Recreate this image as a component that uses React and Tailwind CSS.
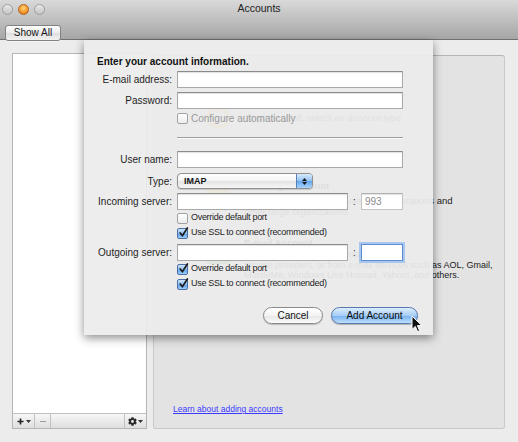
import { FaCog } from "react-icons/fa";

function Light({ orange }) {
  return (
    <span
      className={
        orange
          ? "w-[11px] h-[11px] rounded-full border border-[#b2601e] bg-[radial-gradient(circle_at_50%_35%,#ffd27a,#f39a2c_55%,#d46a17)]"
          : "w-[11px] h-[11px] rounded-full border border-[#9d9d9d] bg-[linear-gradient(#e8e8e8,#c3c3c3)]"
      }
    />
  );
}

function Field({ className = "w-[226px]", children }) {
  return (
    <div
      className={`h-[17px] bg-white border border-[#a9a9a9] border-t-[#8b8b8b] shadow-[inset_0_1px_1px_rgba(0,0,0,0.12)] flex items-center pl-[3px] ${className}`}
    >
      {children}
    </div>
  );
}

function Label({ children }) {
  return (
    <span className="w-[80px] shrink-0 pr-[5px] text-right whitespace-nowrap text-[10px] text-[#1e1e1e]">
      {children}
    </span>
  );
}

function Check({ checked, label, small = true, disabled }) {
  return (
    <div className="flex items-center gap-[3px]">
      <span
        className={
          checked
            ? "w-[11px] h-[11px] rounded-[2px] border border-[#4a6ea5] bg-[linear-gradient(#cfe5fb,#8dbdf0_50%,#5a9ce6_51%,#9fd0fb)] flex items-center justify-center relative"
            : "w-[11px] h-[11px] rounded-[2px] border border-[#a2a2a2] bg-[linear-gradient(#ffffff,#ececec)]"
        }
      >
        {checked && (
          <svg width="11" height="12" viewBox="0 0 11 12" className="absolute -top-[3px] left-[0px]">
            <path d="M2.2 7 L4.4 9.6 L9.4 2" stroke="#1c1c1c" strokeWidth="1.7" fill="none" strokeLinecap="round" />
          </svg>
        )}
      </span>
      <span
        className={
          small
            ? "text-[9px] tracking-[-0.3px] whitespace-nowrap text-[#1e1e1e]"
            : `text-[10px] whitespace-nowrap ${disabled ? "text-[#9a9a9a]" : "text-[#1e1e1e]"}`
        }
      >
        {label}
      </span>
    </div>
  );
}

export default function App() {
  return (
    <div className="w-[518px] h-[442px] relative overflow-hidden bg-[#ececec] font-['Liberation_Sans',Arial,sans-serif] select-none">
      {/* title bar + toolbar */}
      <div className="h-[40px] bg-[linear-gradient(#d9d9d9,#a6a6a6)] border-b border-[#707070]">
        <div className="h-[17px] grid grid-cols-[1fr_auto_1fr] items-center">
          <div className="flex items-center gap-[5px] pl-[2px] pt-[1px]">
            <Light />
            <Light orange />
            <Light />
          </div>
          <span className="text-[10.5px] text-[#222]">Accounts</span>
          <div />
        </div>
        <div className="pl-[5px] pt-[2px]">
          <button className="h-[16px] w-[56px] rounded-[3px] border border-[#828282] bg-[linear-gradient(#fdfdfd,#ececec_50%,#dedede_51%,#f1f1f1)] shadow-[0_1px_0_rgba(255,255,255,0.4)] text-[10px] text-[#161616] leading-none">
            Show All
          </button>
        </div>
      </div>

      {/* window body */}
      <div className="flex px-[12px] pt-[13px] gap-[6px]">
        {/* account list */}
        <div className="w-[135px] h-[376px] border border-[#b5b5b5] bg-white flex flex-col">
          <div className="flex-1" />
          <div className="h-[15px] flex border-t border-[#c2c2c2] bg-[linear-gradient(#f7f7f7,#dedede)]">
            <div className="w-[22px] flex items-center justify-center gap-[2px] border-r border-[#c2c2c2]">
              <svg width="7" height="7" viewBox="0 0 7 7">
                <path d="M3.5 0.5 V6.5 M0.5 3.5 H6.5" stroke="#222" strokeWidth="1.6" />
              </svg>
              <svg width="5" height="3" viewBox="0 0 5 3">
                <path d="M0 0 H5 L2.5 3 Z" fill="#333" />
              </svg>
            </div>
            <div className="w-[16px] flex items-center justify-center border-r border-[#c2c2c2]">
              <span className="w-[6px] h-px bg-[#9a9a9a]" />
            </div>
            <div className="flex-1" />
            <div className="w-[22px] flex items-center justify-center gap-[1px] border-l border-[#c2c2c2]">
              <FaCog className="text-[#2a2a2a]" size={9} />
              <svg width="5" height="3" viewBox="0 0 5 3">
                <path d="M0 0 H5 L2.5 3 Z" fill="#333" />
              </svg>
            </div>
          </div>
        </div>

        {/* right panel */}
        <div className="w-[352px] h-[374px] mt-[2px] rounded-[3px] border border-[#c9c9c9] border-t-[#b5b5b5] bg-[#e3e3e3] flex flex-col pt-[52px] pl-[52px] text-[#1a1a1a]">
          <div className="flex items-center gap-[14px] h-[20px]">
            <span className="w-[24px] h-[20px] rounded-full border-[3px] border-[#e7b53c]" />
            <span className="text-[9.5px] text-[#3a3a3a] whitespace-nowrap">To get started, select an account type.</span>
          </div>
          <div className="flex gap-[14px] mt-[52px]">
            <span className="w-[24px] h-[18px] mt-[3px] rounded-[4px] bg-[linear-gradient(#f4c152,#e08a1c)]" />
            <div>
              <p className="text-[9.5px] font-bold leading-[12px]">Exchange Account</p>
              <p className="text-[9.5px] leading-[11px] mt-[3px] whitespace-nowrap">
                Exchange accounts are used by corporations and
                <br />
                other large organizations.
              </p>
            </div>
          </div>
          <div className="flex gap-[14px] mt-[20px]">
            <span className="w-[24px] h-[20px] mt-[7px] rounded-[4px] bg-[linear-gradient(#9ad86a,#3c9c2c)]" />
            <div>
              <p className="text-[9.5px] font-bold leading-[12px]">E-mail Account</p>
              <p className="text-[9px] leading-[10.5px] whitespace-nowrap">
                E-mail accounts are from internet
                <br />
                service providers, or from e-mail services such as AOL, Gmail,
                <br />
                MobileMe, Windows Live Hotmail, Yahoo!, and others.
              </p>
            </div>
          </div>
          <a className="mt-auto mb-[12px] -ml-[33px] text-[8.5px] text-[#3b3bff] underline">
            Learn about adding accounts
          </a>
        </div>
      </div>

      {/* sheet */}
      <div className="absolute left-[84px] top-[40px] w-[349px] h-[295px] bg-[#ececec]/[0.93] shadow-[0_3px_9px_rgba(0,0,0,0.45)] pl-[13px] flex flex-col">
        <p className="mt-[15px] h-[14px] leading-[14px] text-[10px] font-bold text-[#111]">
          Enter your account information.
        </p>

        <div className="mt-[2px] h-[17px] flex items-center">
          <Label>E-mail address:</Label>
          <Field />
        </div>
        <div className="mt-[4px] h-[17px] flex items-center">
          <Label>Password:</Label>
          <Field />
        </div>
        <div className="mt-[1px] h-[16px] flex items-center pl-[80px]">
          <Check label="Configure automatically" small={false} disabled />
        </div>
        <div className="mt-[11px] ml-[80px] w-[226px] h-px bg-[#9e9e9e] shadow-[0_1px_0_#fafafa]" />

        <div className="mt-[13px] h-[17px] flex items-center">
          <Label>User name:</Label>
          <Field />
        </div>
        <div className="mt-[5px] h-[16px] flex items-center">
          <Label>Type:</Label>
          <div className="w-[136px] h-[16px] rounded-[4px] border border-[#8f8f8f] bg-[linear-gradient(#ffffff,#f3f3f3_50%,#e4e4e4_51%,#f6f6f6)] flex overflow-hidden shadow-[0_1px_1px_rgba(0,0,0,0.15)]">
            <span className="flex-1 pl-[6px] text-[9px] font-bold leading-[14px] text-[#151515]">IMAP</span>
            <span className="w-[16px] border-l border-[#5b80b7] bg-[linear-gradient(#d6eafd,#93c3f3_50%,#63a5ec_51%,#a9d5fb)] flex flex-col items-center justify-center gap-[1px]">
              <svg width="5" height="3" viewBox="0 0 5 3">
                <path d="M0 3 H5 L2.5 0 Z" fill="#1a1a1a" />
              </svg>
              <svg width="5" height="3" viewBox="0 0 5 3">
                <path d="M0 0 H5 L2.5 3 Z" fill="#1a1a1a" />
              </svg>
            </span>
          </div>
        </div>
        <div className="mt-[4px] h-[17px] flex items-center">
          <Label>Incoming server:</Label>
          <Field className="w-[171px]" />
          <span className="w-[13px] text-center text-[10px] text-[#333]">:</span>
          <Field className="w-[42px] border-[#c4c4c4] border-t-[#b0b0b0]">
            <span className="text-[10px] text-[#8a8a8a]">993</span>
          </Field>
        </div>
        <div className="mt-[1px] h-[14px] flex items-center pl-[80px]">
          <Check label="Override default port" />
        </div>
        <div className="mt-[1px] h-[14px] flex items-center pl-[80px]">
          <Check checked label="Use SSL to connect (recommended)" />
        </div>

        <div className="mt-[4px] h-[17px] flex items-center">
          <Label>Outgoing server:</Label>
          <Field className="w-[171px]" />
          <span className="w-[13px] text-center text-[10px] text-[#333]">:</span>
          <div className="w-[42px] h-[17px] bg-white border border-[#5f8dd3] shadow-[0_0_0_2px_#a8c6ee]" />
        </div>
        <div className="mt-[1px] h-[14px] flex items-center pl-[80px]">
          <Check checked label="Override default port" />
        </div>
        <div className="mt-[1px] h-[14px] flex items-center pl-[80px]">
          <Check checked label="Use SSL to connect (recommended)" />
        </div>

        <div className="mt-[16px] h-[17px] flex items-center gap-[8px] pl-[166px]">
          <button className="w-[60px] h-[17px] rounded-full border border-[#8a8a8a] bg-[linear-gradient(#ffffff,#f4f4f4_50%,#e6e6e6_51%,#fbfbfb)] shadow-[0_1px_1px_rgba(0,0,0,0.2)] text-[10px] text-[#111] leading-none">
            Cancel
          </button>
          <button className="w-[87px] h-[17px] rounded-full border border-[#5678ad] bg-[linear-gradient(#dcedfd,#a7cdf5_50%,#74b0ef_51%,#bfe0fc)] shadow-[0_1px_1px_rgba(0,0,0,0.25)] text-[10px] text-[#0d0d0d] leading-none">
            Add Account
          </button>
        </div>
      </div>

      {/* mouse pointer */}
      <svg width="12" height="18" viewBox="0 0 12 18" className="absolute left-[411px] top-[315px]">
        <path
          d="M1 1 L1 14.5 L4.3 11.4 L6.6 16.6 L8.6 15.7 L6.4 10.6 L10.8 10.6 Z"
          fill="#111"
          stroke="#fff"
          strokeWidth="1"
          strokeLinejoin="round"
        />
      </svg>
    </div>
  );
}
